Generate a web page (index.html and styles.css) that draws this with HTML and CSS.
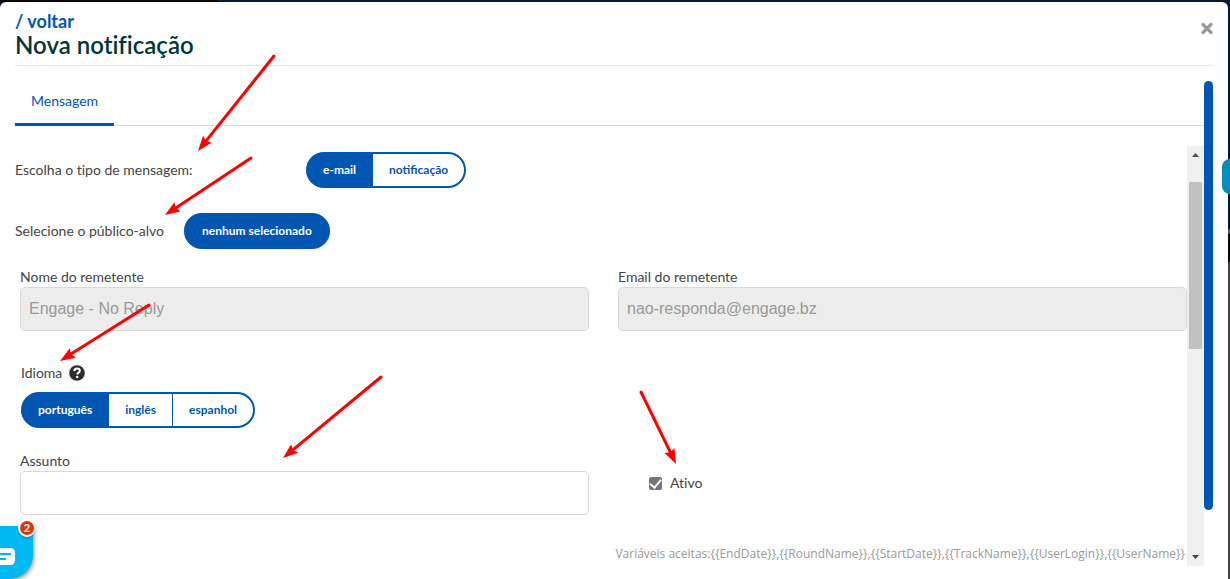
FILE: index.html
```html
<!DOCTYPE html>
<html lang="pt-BR">
<head>
<meta charset="utf-8">
<title>Nova notificação</title>
<link rel="stylesheet" href="styles.css">
</head>
<body>
<main class="modal">
  <header class="header">
    <div>
      <a class="back" href="#">/ voltar</a>
      <h1 class="title">Nova notificação</h1>
    </div>
    <button class="close" type="button" aria-label="Fechar">
      <svg width="13" height="13" viewBox="0 0 13 13"><path d="M3 2.500l8 8M11 2.500l-8 8" stroke="#999" stroke-width="3.200" stroke-linecap="round"/></svg>
    </button>
  </header>
  <div class="body">
    <section class="panel">
      <nav class="tabs"><a class="tab" href="#">Mensagem</a></nav>
      <div class="scroller">
        <form class="form">
          <div class="row">
            <span class="row-label">Escolha o tipo de mensagem:</span>
            <div class="group">
              <button class="seg on" type="button">e-mail</button>
              <button class="seg" type="button">notificação</button>
            </div>
          </div>
          <div class="row audience">
            <span>Selecione o público-alvo</span>
            <button class="pill" type="button">nenhum selecionado</button>
          </div>
          <div class="columns">
            <div class="field">
              <label for="sender">Nome do remetente</label>
              <input class="input" id="sender" type="text" value="Engage - No Reply" disabled>
            </div>
            <div class="field">
              <label for="email">Email do remetente</label>
              <input class="input" id="email" type="text" value="nao-responda@engage.bz" disabled>
            </div>
          </div>
          <div class="language">
            <div class="language-label">
              <span>Idioma</span>
              <svg class="help" width="16" height="16" viewBox="0 0 16 16"><circle cx="8" cy="8" r="7.8" fill="#2d2d2d"/><path d="M5.200 6.100C5.400 4.200 6.500 3.600 8.100 3.600c1.600 0 2.700.9 2.700 2.200 0 1.900-2.500 1.800-2.500 3.700" fill="none" stroke="#fff" stroke-width="2"/><circle cx="8.200" cy="12" r="1.250" fill="#fff"/></svg>
            </div>
            <div class="group">
              <button class="seg on" type="button">português</button>
              <button class="seg" type="button">inglês</button>
              <button class="seg" type="button">espanhol</button>
            </div>
          </div>
          <div class="columns subject">
            <div class="field">
              <label for="subject">Assunto</label>
              <input class="input" id="subject" type="text">
            </div>
            <div class="active">
              <input class="check" id="active" type="checkbox" checked>
              <label for="active">Ativo</label>
            </div>
          </div>
          <p class="vars">Variáveis aceitas:{{EndDate}},{{RoundName}},{{StartDate}},{{TrackName}},{{UserLogin}},{{UserName}}</p>
        </form>
        <div class="scrollbar">
          <svg width="17" height="17" viewBox="0 0 17 17"><path d="M5 11l3.500-4 3.500 4z" fill="#505050"/></svg>
          <div class="track"><div class="thumb"></div></div>
          <svg width="17" height="17" viewBox="0 0 17 17"><path d="M5 6l3.500 4L12 6z" fill="#404040"/></svg>
        </div>
      </div>
    </section>
    <div class="progress"></div>
  </div>
</main>
<div class="side-tab"></div>
<button class="chat" type="button" aria-label="Mensagens">
  <svg width="33" height="53" viewBox="0 0 33 53"><path d="M0 22h10q5 0 5 5v7q0 5-5 5H0z" fill="#fff"/><path d="M0 28h11M0 33h6" stroke="#00b9f2" stroke-width="2"/></svg>
  <span class="badge">2</span>
</button>
<svg class="arrows" width="1230" height="579" viewBox="0 0 1230 579">
  <defs><marker id="head" markerUnits="userSpaceOnUse" markerWidth="16" markerHeight="12" refX="3" refY="5.500" orient="auto"><path d="M0 0L15 5.500 0 11 2 5.500z" fill="#f00"/></marker></defs>
  <g stroke="#f00" stroke-width="3">
    <path d="M274 56L205.500 141.600" marker-end="url(#head)"/>
    <path d="M251 158L175 208.400" marker-end="url(#head)"/>
    <path d="M149 305L70.200 354.600" marker-end="url(#head)"/>
    <path d="M381 377L292.300 450.400" marker-end="url(#head)"/>
    <path d="M641 392L670.800 453.200" marker-end="url(#head)"/>
  </g>
  <g fill="#f00"><circle cx="274" cy="56" r="1.500"/><circle cx="251" cy="158" r="1.500"/><circle cx="149" cy="305" r="1.500"/><circle cx="381" cy="377" r="1.500"/><circle cx="641" cy="392" r="1.500"/></g>
</svg>
</body>
</html>
```
FILE: styles.css
```css
* { box-sizing: border-box; }
body {
  margin: 0;
  height: 100vh;
  padding: 2px 2px 0 0;
  overflow: hidden;
  position: relative;
  background: linear-gradient(90deg, #0b0808 218px, transparent 218px) top / 100% 2px no-repeat,
    linear-gradient(#001a38 229px, #555 229px, #555 234px, #050505 234px, #050505 262px, #444 262px);
  font-family: Lato, "Open Sans", sans-serif;
  font-size: 14px;
  line-height: 20px;
  font-variant-ligatures: none;
  color: #444;
}
button, a { font-family: inherit; text-decoration: none; }
.modal {
  height: 100%;
  padding: 0 15px;
  border-radius: 6px 6px 0 0;
  background: #fff;
}
.header {
  display: flex;
  justify-content: space-between;
  align-items: flex-start;
  height: 64px;
  padding-top: 9px;
  border-bottom: 1px solid #e8e8e8;
}
.back { display: block; font-size: 18px; font-weight: 700; color: #0056b0; }
.title { margin: 0; font-size: 24px; line-height: 28px; font-weight: 600; color: #003636; }
.close { display: flex; margin-top: 11px; padding: 0; border: 0; background: none; }
.body { display: flex; padding-top: 15px; }
.panel { flex: 1; min-width: 0; }
.progress { width: 9px; height: 429px; border-radius: 5px; background: #0056b0; }
.tabs { display: flex; height: 45px; border-bottom: 1px solid #d9d9d9; }
.tab {
  height: 45px;
  padding: 10px 16px 0;
  border-bottom: 3px solid #0056b0;
  color: #0056b0;
}
.scroller { display: flex; margin-top: 20px; }
.form { flex: 1; min-width: 0; padding-top: 6px; }
.row { display: flex; align-items: center; }
.row-label { width: 291px; }
.audience { gap: 20px; margin-top: 25px; }
.group { display: flex; width: fit-content; }
.seg, .pill {
  height: 36px;
  padding: 0 16px 2px;
  border: 2px solid #0056b0;
  border-width: 2px 0;
  background: #fff;
  color: #0056b0;
  font-size: 12px;
  font-weight: 700;
}
.seg:first-child { border-left-width: 1px; border-radius: 18px 0 0 18px; }
.seg:last-child { border-right-width: 2px; border-radius: 0 18px 18px 0; }
.seg + .seg { border-left-width: 1px; }
.seg.on, .pill { background: #0056b0; color: #fff; }
.pill { padding: 0 18px 2px; border-radius: 18px; }
.columns {
  display: grid;
  grid-template-columns: 1fr 1fr;
  column-gap: 29px;
  margin-top: 18px;
  padding-left: 5px;
}
.field { display: flex; flex-direction: column; }
.input {
  width: 100%;
  height: 44px;
  padding: 0 8px;
  border: 1px solid #d9d9d9;
  border-radius: 5px;
  background: #fff;
  font: 16px "Liberation Sans", Arial, sans-serif;
}
.input:disabled { background: #ededed; color: #999; }
.language { margin-top: 32px; padding-left: 6px; }
.language-label { display: flex; align-items: center; gap: 7px; margin-bottom: 9px; }
.subject { margin-top: 23px; }
.active { display: flex; align-items: center; gap: 8px; padding-left: 31px; }
.check {
  appearance: none;
  width: 13px;
  height: 13px;
  margin: 0;
  border-radius: 2px;
  background: #767676;
  display: grid;
  place-items: center;
}
.check::after {
  content: "";
  width: 5px;
  height: 9px;
  margin-bottom: 2px;
  border: solid #fff;
  border-width: 0 2px 2px 0;
  transform: rotate(40deg);
}
.vars {
  margin: 29px 2px 0;
  text-align: right;
  font-family: "Open Sans", sans-serif;
  font-size: 12px;
  color: #999;
}
.scrollbar { display: flex; flex-direction: column; width: 17px; height: 420px; background: #f0f0f0; }
.track { flex: 1; padding: 19px 2px 0; }
.thumb { height: 167px; background: #c1c1c1; }
.side-tab {
  position: absolute;
  right: 0;
  top: 159px;
  width: 8px;
  height: 35px;
  border-radius: 8px 0 0 8px;
  background: #008fb8;
}
.chat {
  position: absolute;
  left: 0;
  bottom: 0;
  width: 33px;
  height: 53px;
  padding: 0;
  border: 0;
  border-radius: 0 0 24px 0;
  background: #00b9f2;
  box-shadow: 1px 2px 4px #0006;
}
.badge {
  position: absolute;
  top: -7px;
  right: -3px;
  width: 18px;
  height: 18px;
  border: 2px solid #fff;
  border-radius: 50%;
  background: #de350b;
  box-shadow: 0 1px 2px #0005;
  color: #fff;
  font-size: 11px;
  font-weight: 700;
  line-height: 14px;
}
.arrows { position: absolute; left: 0; top: 0; pointer-events: none; }
```
